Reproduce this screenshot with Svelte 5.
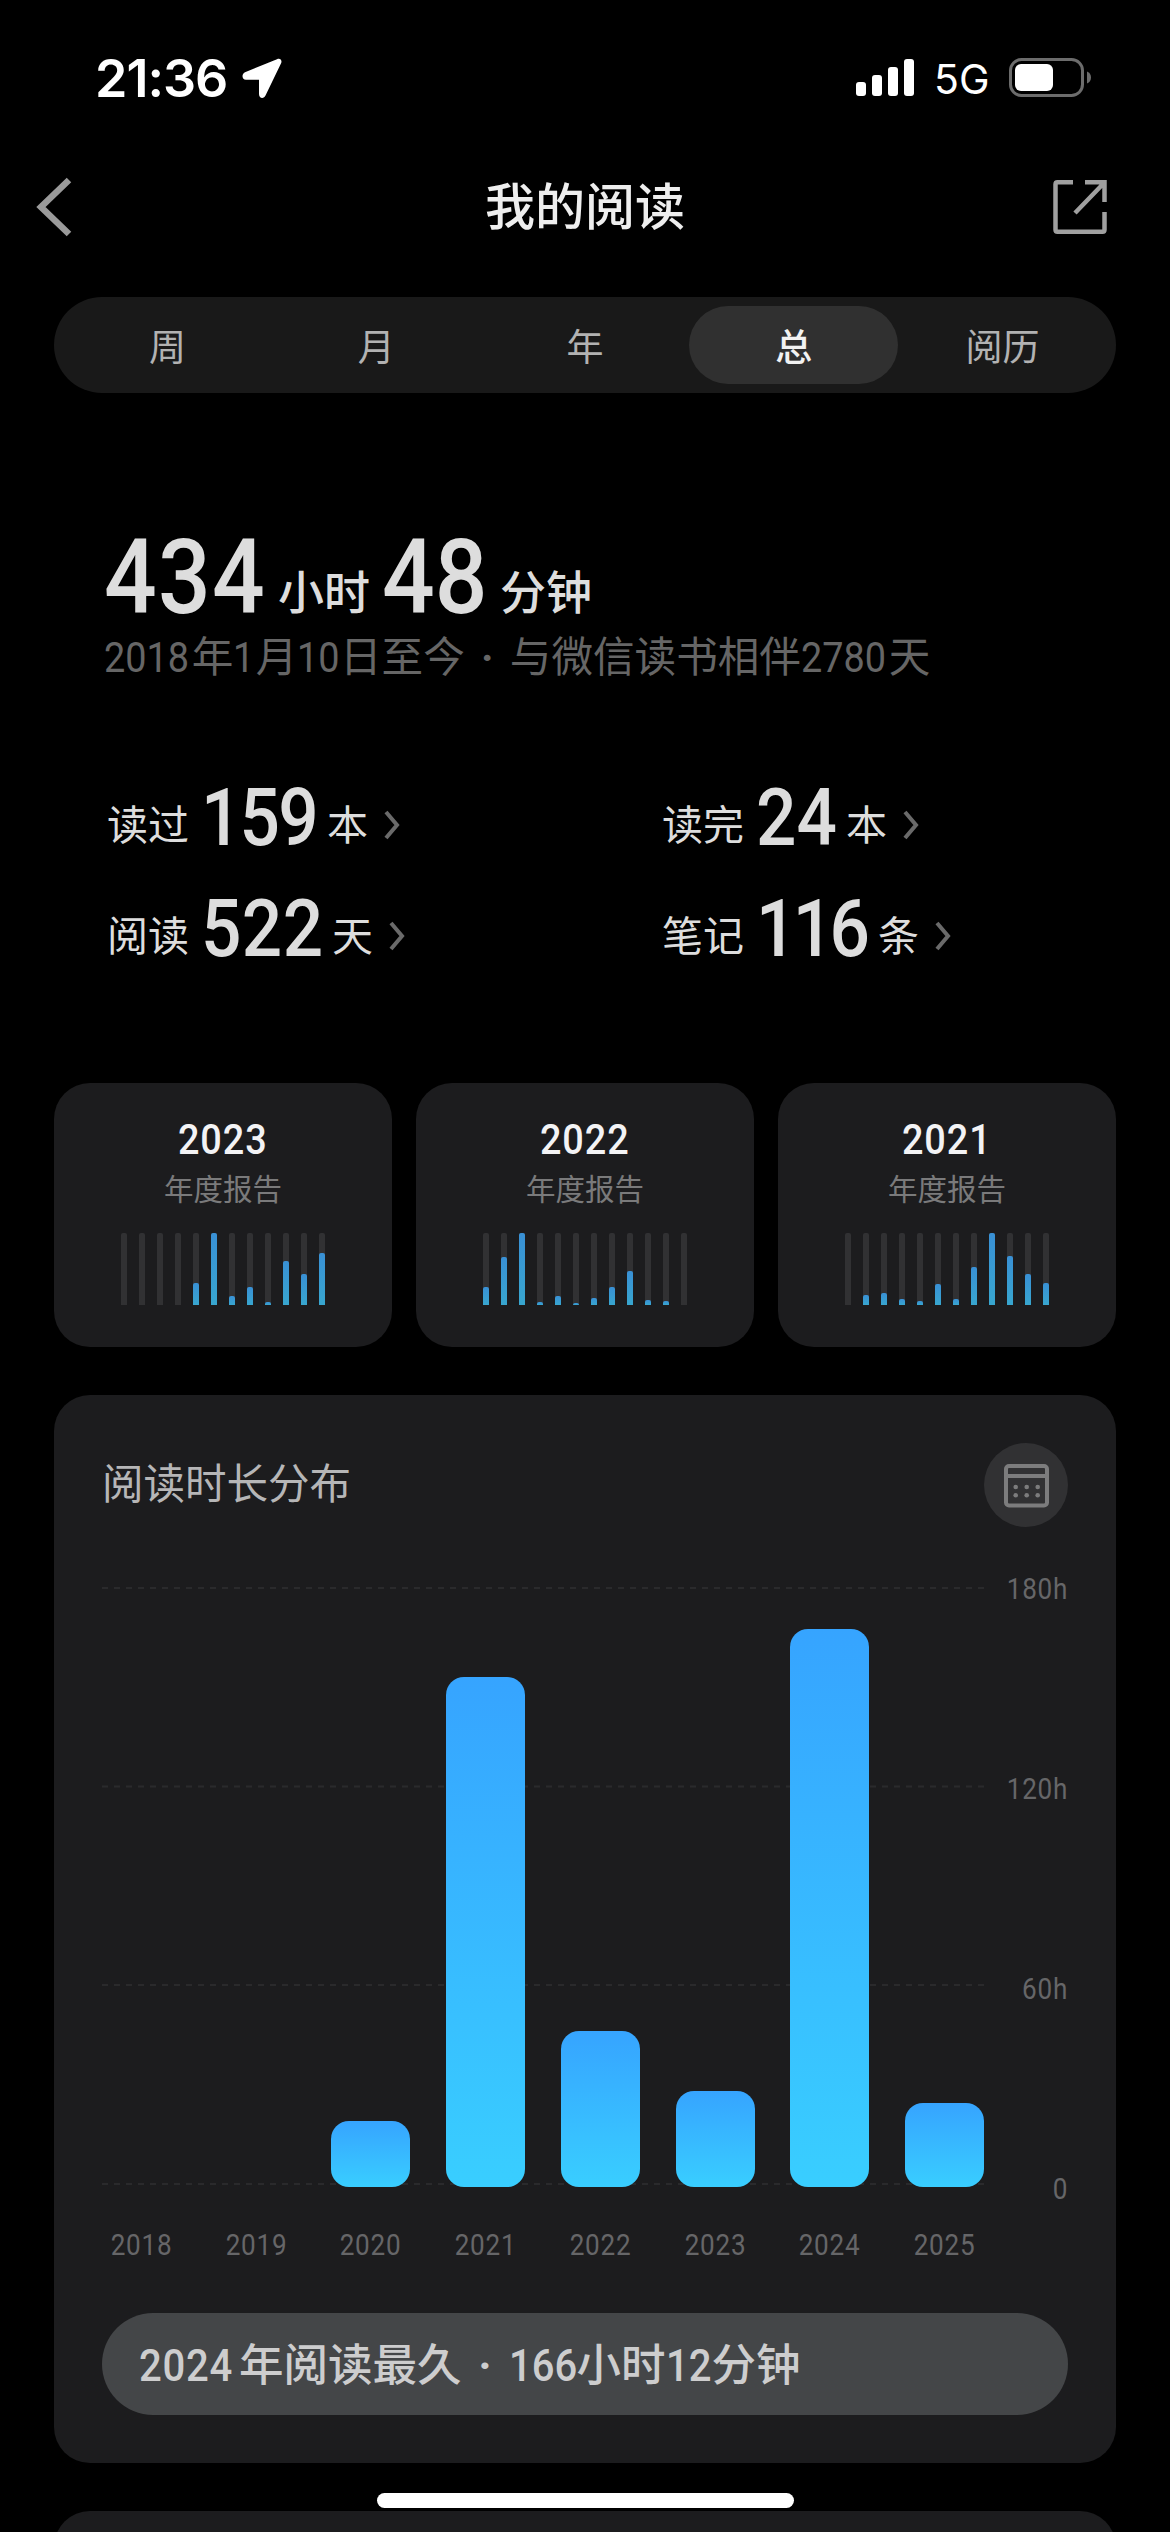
<script>
  const tabs = ['周', '月', '年', '总', '阅历'];
  const active = '总';

  // w: number box width, ls: tracking that suits the digit mix
  const stats = [
    { label: '读过', num: '159', unit: '本', w: 126, ls: -2 },
    { label: '读完', num: '24', unit: '本', w: 90, ls: 0 },
    { label: '阅读', num: '522', unit: '天', w: 131, ls: 0.5 },
    { label: '笔记', num: '116', unit: '条', w: 122, ls: -4 }
  ];

  const reports = [
    { year: '2023', months: [0, 0, 0, 0, 22, 72, 9, 18, 3, 44, 31, 52] },
    { year: '2022', months: [18, 48, 72, 3, 9, 2, 7, 18, 34, 5, 4, 0] },
    { year: '2021', months: [0, 10, 12, 6, 4, 21, 6, 38, 72, 49, 31, 22] }
  ];

  const years = [
    { year: '2018', h: 0 },
    { year: '2019', h: 0 },
    { year: '2020', h: 66 },
    { year: '2021', h: 510 },
    { year: '2022', h: 156 },
    { year: '2023', h: 96 },
    { year: '2024', h: 558 },
    { year: '2025', h: 84 }
  ];
  const scale = ['180h', '120h', '60h', '0'];
</script>

<div class="screen">
  <header class="status">
    <span class="time">21:36</span>
    <svg class="loc" width="42" height="42" viewBox="0 0 42 42"><path d="M36 2.200 4 15.200C.3 17 .8 22.800 5 22.800H18V37C18 41.800 23 42.200 24.500 38.500L40.200 6C41.300 3 39 .8 36 2.200Z" fill="#fff" /></svg>
    <svg class="signal" width="60" height="40" viewBox="0 0 60 40" fill="#fff">
      <rect x="0" y="24" width="10" height="14" rx="3" />
      <rect x="16" y="17" width="10" height="21" rx="3" />
      <rect x="32" y="9" width="10" height="29" rx="3" />
      <rect x="48" y="1" width="10" height="37" rx="3" />
    </svg>
    <span class="net">5G</span>
    <svg class="battery" width="84" height="40" viewBox="0 0 84 40">
      <rect x="1.500" y="1.500" width="72" height="36" rx="11" fill="none" stroke="#6c6c6c" stroke-width="3" />
      <rect x="6" y="6" width="38" height="27" rx="6" fill="#fff" />
      <path d="M78 13.500c2.600 1 4 3.300 4 6s-1.400 5-4 6z" fill="#6c6c6c" />
    </svg>
  </header>

  <nav class="nav">
    <svg width="40" height="62" viewBox="0 0 40 62"><path d="M35 4 7 31 35 58" fill="none" stroke="#9a9a9a" stroke-width="6.500" /></svg>
    <h1>我的阅读</h1>
    <svg class="share" width="58" height="58" viewBox="0 0 58 58" fill="none" stroke="#a0a0a0" stroke-width="4.500"><path d="M22 4.300H6.500Q4.500 4.300 4.500 6.300V51.700Q4.500 53.700 6.500 53.700H51.500Q53.500 53.700 53.500 51.700V34M34 4.300H53.500V24M52 6 24 35" /></svg>
  </nav>

  <div class="tabs">
    {#each tabs as t}
      <div class="tab" class:active={t === active}>{t}</div>
    {/each}
  </div>

  <section class="total">
    <div class="big"><b class="n1">434</b><span class="u1">小时</span><b class="n2">48</b><span>分钟</span></div>
    <p class="since"><i class="y">2018</i>年<i class="one">1</i>月<i class="ten">10</i>日至今<span class="dot">·</span>与微信读书相伴<i class="y">2780</i>天</p>
  </section>

  <section class="stats">
    {#each stats as s}
      <div class="stat">
        <span class="label">{s.label}</span>
        <b style="width: {s.w}px; letter-spacing: {s.ls}px">{s.num}</b>
        <span>{s.unit}</span>
        <svg width="18" height="30" viewBox="0 0 18 30"><path d="M3 2 14 15 3 28" fill="none" stroke="#6a6a6a" stroke-width="4" /></svg>
      </div>
    {/each}
  </section>

  <section class="reports">
    {#each reports as r}
      <article class="report">
        <h2>{r.year}</h2>
        <p>年度报告</p>
        <div class="months">
          {#each r.months as m}
            <div class="track"><div class="fill" style="height: {m}px"></div></div>
          {/each}
        </div>
      </article>
    {/each}
  </section>

  <section class="card">
    <div class="head">
      <h3>阅读时长分布</h3>
      <div class="cal">
        <svg width="46" height="46" viewBox="0 0 46 46">
          <g fill="none" stroke="#7c7c7d" stroke-width="4"><rect x="3" y="4" width="41" height="39.500" rx="3" /><path d="M3 14H44" /></g>
          <g fill="#7c7c7d">
            <circle cx="12.700" cy="25" r="2.300" /><circle cx="23.700" cy="25" r="2.300" /><circle cx="34.700" cy="25" r="2.300" />
            <circle cx="12.700" cy="33.300" r="2.300" /><circle cx="23.700" cy="33.300" r="2.300" /><circle cx="34.700" cy="33.300" r="2.300" />
          </g>
        </svg>
      </div>
    </div>
    <div class="chart">
      <div class="plot">
        <svg class="grid" width="882" height="600" viewBox="0 0 882 600" stroke="#2a2a2c" stroke-width="2" stroke-dasharray="6 6">
          <path d="M0 1H882M0 199.500H882M0 398H882M0 597H882" />
        </svg>
        <div class="bars">
          {#each years as y}
            <div class="bar" style="height: {y.h}px"></div>
          {/each}
        </div>
      </div>
      <div class="scale">
        {#each scale as s}<span>{s}</span>{/each}
      </div>
    </div>
    <div class="axis">
      {#each years as y}<span>{y.year}</span>{/each}
    </div>
    <div class="best"><i class="y">2024</i>年阅读最久<span class="dot">·</span><i class="hours">166</i>小时<i class="mins">12</i>分钟</div>
  </section>

  <div class="home"></div>
  <div class="next"></div>
</div>

<style>
  :global(body) { background: #000; }
  .screen {
    width: 1170px; height: 2532px; overflow: hidden; background: #000;
    box-sizing: border-box; color: #ddd;
    font-family: Roboto, 'Noto Sans CJK SC', sans-serif;
    display: flex; flex-direction: column;
  }
  h1, h2, h3, p { margin: 0; font-weight: 400; }
  i { font-style: normal; }
  .status { height: 156px; flex: none; display: flex; align-items: center; padding: 0 77px 0 95px; color: #fff; font-family: Inter, sans-serif; }
  .time { font-size: 52px; font-weight: 600; letter-spacing: -1px; width: 146px; white-space: nowrap; }
  .loc { margin-right: auto; }
  .signal { margin-right: 18px; }
  .net { font-size: 41px; width: 75px; padding-top: 2px; white-space: nowrap; }
  .battery { flex: none; }
  .nav { height: 102px; flex: none; display: grid; grid-template-columns: 1fr auto 1fr; align-items: center; padding: 0 34px; }
  .nav h1 { font-size: 50px; font-weight: 500; color: #eee; line-height: 60px; padding-top: 2px; }
  .share { justify-self: end; margin-right: 27px; }
  .tabs { margin: 39px 54px 0; height: 96px; flex: none; box-sizing: border-box; padding: 9px; border-radius: 48px; background: #191919; display: flex; }
  .tab { flex: 1; border-radius: 39px; display: flex; align-items: center; justify-content: center; font-size: 37px; color: #b2b2b2; }
  .tab.active { background: #303030; color: #f2f2f2; font-weight: 500; }

  /* Numerals are drawn slightly condensed inside boxes of fixed width */
  b, i { display: inline-block; transform: scaleX(0.9); transform-origin: left; }

  .total { margin-top: 138px; padding-left: 104px; flex: none; height: 163px; }
  .big { display: flex; align-items: baseline; height: 94px; line-height: 94px; font-size: 46px; font-weight: 500; white-space: nowrap; }
  .big span { transform: translateY(-4px); }
  .big b { font-size: 103px; font-weight: 500; }
  .big .n1 { width: 174px; letter-spacing: 1.500px; }
  .u1 { width: 104px; }
  .n2 { width: 118px; }
  .since { margin-top: 5px; font-size: 41.600px; line-height: 56px; color: #666; white-space: nowrap; }
  .since i { font-size: 42px; font-weight: 400; }
  .since .y { width: 87.800px; }
  .since .one { width: 22.400px; }
  .since .ten { width: 42.600px; }
  .dot { display: inline-block; text-align: center; width: 45px; font-weight: 700; }
  .stats { flex: none; margin: 89px 0 0; padding-left: 107px; display: grid; grid-template-columns: 555px 400px; grid-auto-rows: 111px; height: 222px; }
  .stat { display: flex; align-items: baseline; font-size: 41px; line-height: 70px; white-space: nowrap; }
  .stat span { transform: translateY(-5px); }
  .stat .label { width: 94px; }
  .stat b { font-size: 79px; font-weight: 500; }
  .stat svg { margin-left: 15px; transform: translateY(-5px); }
  .reports { flex: none; margin: 78px 54px 0; display: grid; grid-template-columns: repeat(3, 1fr); gap: 24px; height: 264px; }
  .report { background: #1c1c1e; border-radius: 36px; display: flex; flex-direction: column; align-items: center; }
  .report h2 { font-size: 42px; font-weight: 500; letter-spacing: 1px; transform: scaleX(0.9); color: #f3f3f5; line-height: 50px; margin-top: 32px; }
  .report p { font-size: 29.500px; line-height: 40px; margin-top: 5px; color: #7a7a7b; }
  .months { display: flex; gap: 12px; height: 72px; margin-top: 23px; }
  .track { width: 6px; background: #313133; border-radius: 2px 2px 0 0; display: flex; align-items: flex-end; }
  .fill { width: 6px; border-radius: 2px 2px 0 0; background: linear-gradient(#3990d5, #38a6cf); }
  .card { flex: none; margin: 48px 54px 0; height: 1068px; border-radius: 36px; background: #1c1c1e; box-sizing: border-box; padding: 48px; display: flex; flex-direction: column; }
  .head { height: 84px; display: flex; align-items: center; justify-content: space-between; }
  .head h3 { font-size: 41.500px; line-height: 60px; color: #b6b6b7; }
  .cal { width: 84px; height: 84px; border-radius: 50%; background: #313133; display: flex; align-items: center; justify-content: center; }
  .chart { display: flex; justify-content: space-between; margin-top: 60px; height: 600px; }
  .plot { width: 882px; height: 600px; display: grid; }
  .grid, .bars { grid-area: 1 / 1; }
  .bars { display: flex; justify-content: space-between; align-items: flex-end; }
  .bar { width: 79px; border-radius: 18px; background: linear-gradient(#36a4ff, #39ceff); }
  .scale { display: flex; flex-direction: column; justify-content: space-between; align-items: flex-end; height: 634px; margin-top: -15px; }
  .scale span, .axis span { font-size: 29px; line-height: 34px; font-weight: 400; color: #666668; letter-spacing: 0.800px; transform: scaleX(0.9); }
  .scale span { transform-origin: right; }
  .axis { width: 882px; margin-top: 41px; display: flex; justify-content: space-between; }
  .axis span { width: 79px; text-align: center; }
  .best { margin-top: 51px; height: 102px; border-radius: 51px; background: #444648; color: #cdcdce; font-size: 44.500px; line-height: 106px; padding-left: 37px; white-space: nowrap; font-weight: 500; }
  .best .dot { width: 47px; }
  .best i { line-height: 60px; }
  .best .y { width: 100px; letter-spacing: 0.800px; }
  .best .hours { width: 68px; }
  .best .mins { width: 46px; }
  .home { flex: none; align-self: center; width: 417px; height: 15px; border-radius: 8px; background: #fff; margin-top: 30px; }
  .next { flex: none; height: 60px; margin: 3px 54px 0; border-radius: 36px 36px 0 0; background: #1c1c1e; }
</style>
